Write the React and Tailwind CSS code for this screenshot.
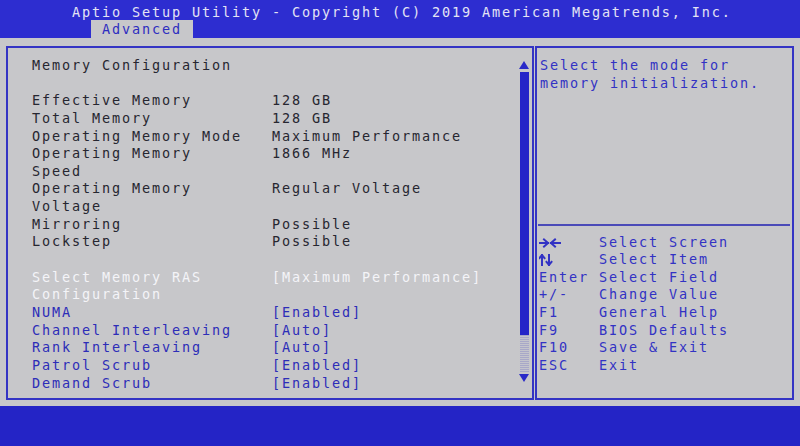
import React from "react";

const rows = [
  { l: "Memory Configuration", k: "s" },
  { k: "blank" },
  { l: "Effective Memory", v: "128 GB", k: "s" },
  { l: "Total Memory", v: "128 GB", k: "s" },
  { l: "Operating Memory Mode", v: "Maximum Performance", k: "s" },
  { l: "Operating Memory", v: "1866 MHz", k: "s" },
  { l: "Speed", k: "s" },
  { l: "Operating Memory", v: "Regular Voltage", k: "s" },
  { l: "Voltage", k: "s" },
  { l: "Mirroring", v: "Possible", k: "s" },
  { l: "Lockstep", v: "Possible", k: "s" },
  { k: "blank" },
  { l: "Select Memory RAS", v: "[Maximum Performance]", k: "sel" },
  { l: "Configuration", k: "sel" },
  { l: "NUMA", v: "[Enabled]", k: "o" },
  { l: "Channel Interleaving", v: "[Auto]", k: "o" },
  { l: "Rank Interleaving", v: "[Auto]", k: "o" },
  { l: "Patrol Scrub", v: "[Enabled]", k: "o" },
  { l: "Demand Scrub", v: "[Enabled]", k: "o" },
];

const LRIcon = () => (
  <svg width="22" height="10" viewBox="0 0 22 10" className="mt-[4px]">
    <g stroke="#3232c4" strokeWidth="2" fill="none" strokeLinecap="square">
      <line x1="0" y1="5" x2="9" y2="5" />
      <polyline points="5,1.5 9,5 5,8.5" />
      <line x1="12" y1="5" x2="21" y2="5" />
      <polyline points="16,1.5 12,5 16,8.5" />
    </g>
  </svg>
);

const UDIcon = () => (
  <svg width="14" height="12" viewBox="0 0 14 12" className="mt-[3px]">
    <g stroke="#3232c4" strokeWidth="2" fill="none" strokeLinecap="square">
      <line x1="3" y1="1" x2="3" y2="11" />
      <polyline points="0.5,4 3,1 5.5,4" />
      <line x1="10" y1="1" x2="10" y2="11" />
      <polyline points="7.5,8 10,11 12.5,8" />
    </g>
  </svg>
);

const keys = [
  [<LRIcon />, "Select Screen"],
  [<UDIcon />, "Select Item"],
  ["Enter", "Select Field"],
  ["+/-", "Change Value"],
  ["F1", "General Help"],
  ["F9", "BIOS Defaults"],
  ["F10", "Save & Exit"],
  ["ESC", "Exit"],
];

const colorFor = (k) =>
  k === "sel" ? "text-[#f4f4f8]" : k === "o" ? "text-[#2d2db8]" : "text-[#262630]";

export default function App() {
  return (
    <div className="w-[800px] h-[446px] flex flex-col overflow-hidden bg-[#c7c7ca] font-['DejaVu_Sans_Mono',monospace] text-[13.5px] tracking-[1.87px] leading-[17.65px]">
      {/* header */}
      <div className="h-[38px] bg-[#2d2dd0] flex flex-col">
        <div className="h-[20px] pt-[4px] pl-[72px] text-[#e4e4f4] whitespace-pre">
          Aptio Setup Utility - Copyright (C) 2019 American Megatrends, Inc.
        </div>
        <div className="ml-[91px] w-[102px] h-[18px] bg-[#c7c7ca] pl-[11px] text-[#2d2dc0] leading-[19px]">
          Advanced
        </div>
      </div>

      {/* main */}
      <div className="flex-1 flex pt-[8px] pl-[6px] pr-[6px] pb-[6px] gap-[1px]">
        {/* left panel */}
        <div className="w-[528px] border-[2px] border-[#3434c4] flex">
          <div className="flex-1 pl-[24px] pt-[9px]">
            {rows.map((r, i) =>
              r.k === "blank" ? (
                <div key={i} className="h-[17.65px]" />
              ) : (
                <div key={i} className={`flex h-[17.65px] whitespace-pre ${colorFor(r.k)}`}>
                  <div className="w-[240px]">{r.l}</div>
                  {r.v && <div>{r.v}</div>}
                </div>
              )
            )}
          </div>
          {/* scrollbar */}
          <div className="w-[14px] mr-[1px] flex flex-col items-center pt-[13px]">
            <svg width="10" height="8" viewBox="0 0 10 8">
              <polygon points="5,0 10,8 0,8" fill="#2a2ac8" />
            </svg>
            <div className="mt-[3px] w-[9px] h-[263px] bg-[#2424c8]" />
            <div className="w-[9px] h-[37px] bg-[repeating-linear-gradient(0deg,#a8a8c8_0px,#a8a8c8_1px,#c4c4cc_1px,#c4c4cc_2px)]" />
            <svg className="mt-[2px]" width="10" height="8" viewBox="0 0 10 8">
              <polygon points="0,0 10,0 5,8" fill="#2a2ac8" />
            </svg>
          </div>
        </div>

        {/* right panel */}
        <div className="flex-1 border-[2px] border-[#3434c4] flex flex-col text-[#3232c4]">
          <div className="h-[176px] pl-[3px] pt-[9px]">
            <div>Select the mode for</div>
            <div>memory initialization.</div>
          </div>
          <div className="mx-[1px] mr-[2px] h-[1.5px] bg-[#4a4ab8]" />
          <div className="pl-[2px] pt-[8px]">
            {keys.map(([k, d], i) => (
              <div key={i} className="flex h-[17.65px] whitespace-pre">
                <div className="w-[60px] flex">{k}</div>
                <div>{d}</div>
              </div>
            ))}
          </div>
        </div>
      </div>

      {/* footer */}
      <div className="h-[40px] bg-[#2424c6]" />
    </div>
  );
}
